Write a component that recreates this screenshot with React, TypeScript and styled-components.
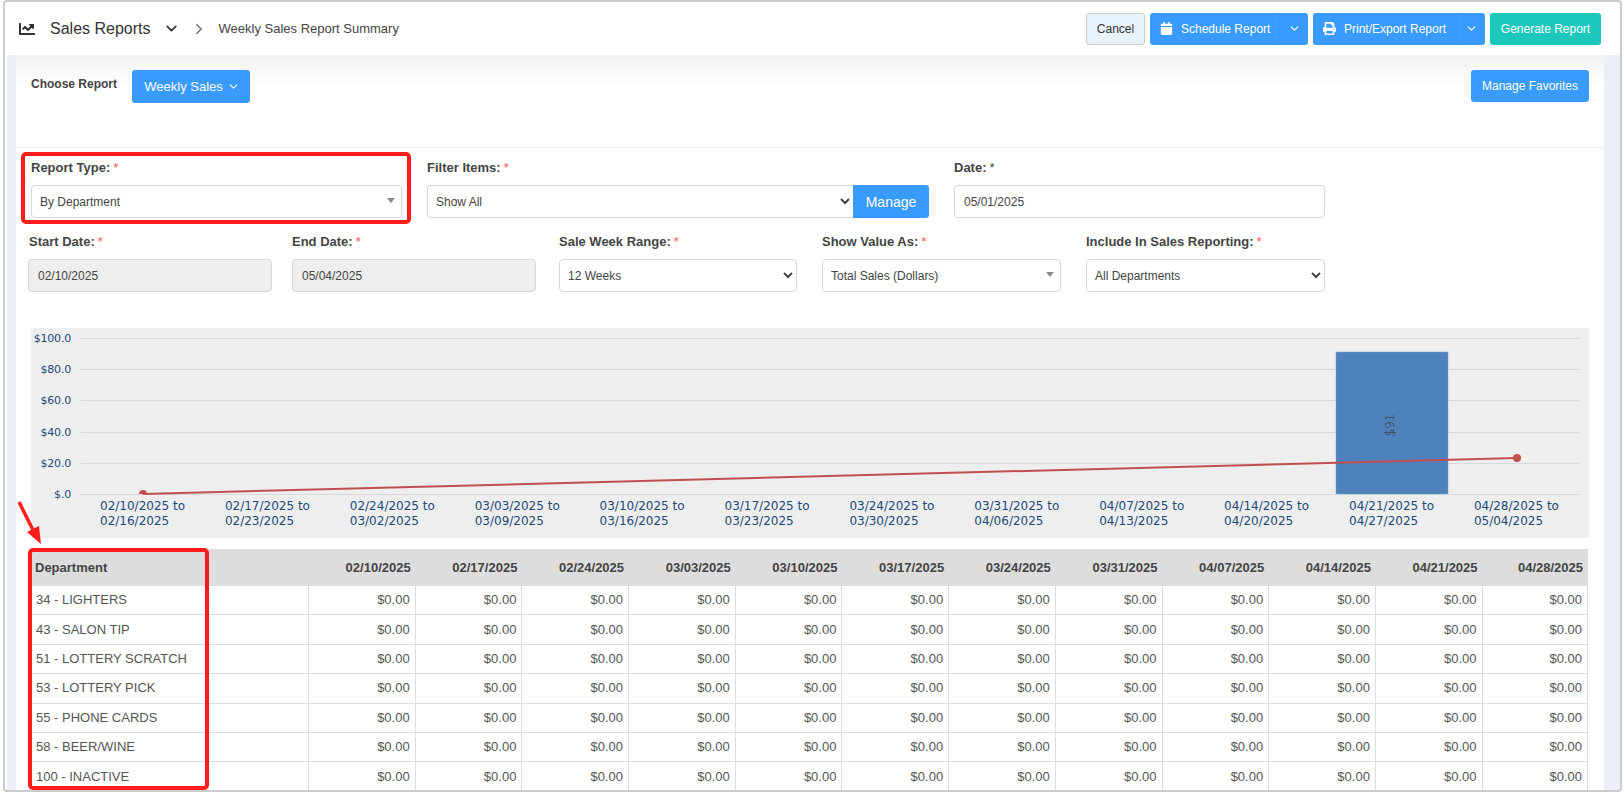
import React from 'react';
import styled, { createGlobalStyle } from 'styled-components';
import { ChevronDown, ChevronRight } from 'lucide-react';
import { FaCalendar, FaChartLine, FaPrint } from 'react-icons/fa';

const GlobalStyle = createGlobalStyle`
  html, body { margin: 0; padding: 0; background: #fff; }
  body { font-family: "Liberation Sans", Arial, sans-serif; color: #444; }
  * { box-sizing: border-box; }
`;

const Page = styled.div`
  width: 1624px;
  height: 792px;
  padding-left: 3px;
  padding-right: 2px;
  overflow: hidden;
`;

const Frame = styled.div`
  height: 792px;
  display: flex;
  flex-direction: column;
  border: 2px solid #ccc;
  border-radius: 4px;
  overflow: hidden;
  background: #fff;
`;

const TopBar = styled.header`
  height: 53px;
  flex: none;
  display: flex;
  align-items: center;
  justify-content: space-between;
  padding: 0 19px 0 14px;
`;

const TitleGroup = styled.div`
  display: flex;
  align-items: center;
  color: #333;
  svg { flex: none; }
`;

const Title = styled.span`
  font-size: 16px;
  margin-left: 15px;
  margin-right: 12px;
`;

const BreadcrumbSep = styled(ChevronRight)`
  margin-left: 10px;
  color: #777;
`;

const Crumb = styled.span`
  font-size: 13px;
  color: #444;
  margin-left: 11px;
`;

const Actions = styled.div`
  display: flex;
  gap: 5px;
  margin-top: 4px;
  margin-bottom: 4px;
`;

const Btn = styled.button<{ $tone?: 'blue' | 'green' | 'light'; $w?: number }>`
  height: 32px;
  width: ${p => (p.$w ? `${p.$w}px` : 'auto')};
  display: inline-flex;
  align-items: center;
  justify-content: center;
  padding: 0;
  border-radius: 3px;
  font-family: inherit;
  font-size: 12px;
  border: 1px solid ${p => (p.$tone === 'light' ? '#ccc' : 'transparent')};
  color: ${p => (p.$tone === 'light' ? '#333' : '#fff')};
  background: ${p => (p.$tone === 'light' ? '#e8f2fb' : p.$tone === 'green' ? '#1cc8bc' : '#3a9bff')};
`;

const Split = styled.div<{ $w: number }>`
  display: flex;
  width: ${p => p.$w}px;
  height: 32px;
  border-radius: 3px;
  overflow: hidden;
  background: #3a9bff;
  color: #fff;
  font-size: 12px;
`;

const SplitMain = styled.div<{ $w: number }>`
  width: ${p => p.$w}px;
  display: flex;
  align-items: center;
  gap: 8px;
  padding-left: 10px;
  border-right: 1px solid #3894f5;
`;

const SplitCaret = styled.div`
  flex: 1;
  display: flex;
  align-items: center;
  justify-content: center;
`;

const Body = styled.div`
  flex: 1;
  min-height: 0;
  margin-left: 2px;
  padding: 0 16px 0 9px;
  background: #eceff8;
`;

const Card = styled.main`
  height: 100%;
  overflow: hidden;
  background: linear-gradient(#f2f2f5 0, #fff 32px);
`;

const ChooserRow = styled.div`
  height: 93px;
  display: flex;
  justify-content: space-between;
  align-items: flex-start;
  padding: 15px 15px 0 15px;
  border-bottom: 1px solid #eee;
`;

const ChooserLeft = styled.div`
  display: flex;
  gap: 15px;
`;

const ChooserLabel = styled.span`
  font-size: 12px;
  font-weight: bold;
  color: #444;
  margin-top: 7px;
`;

const WeeklyBtn = styled(Btn)`
  width: 118px;
  height: 33px;
  gap: 4px;
  font-size: 13px;
  padding-left: 2px;
`;

const FormRow = styled.div<{ $top: number }>`
  display: flex;
  margin-top: ${p => p.$top}px;
`;

const Field = styled.div<{ $w: number; $left: number }>`
  position: relative;
  width: ${p => p.$w}px;
  margin-left: ${p => p.$left}px;
  flex: none;
`;

const Label = styled.label<{ $nudge?: number }>`
  display: block;
  height: 15px;
  line-height: 15px;
  margin-left: ${p => p.$nudge ?? 0}px;
  font-size: 13px;
  font-weight: bold;
  color: #444;
  margin-bottom: 10px;
`;

const Req = styled.span<{ $plain?: boolean }>`
  font-weight: normal;
  color: ${p => (p.$plain ? '#444' : '#f55')};
  margin-left: 3px;
`;

const controlCss = `
  height: 33px;
  width: 100%;
  border: 1px solid #d8d8d8;
  border-radius: 4px;
  font-family: inherit;
  font-size: 12px;
  color: #444;
  background: #fff;
`;

const TextInput = styled.input<{ $off?: boolean }>`
  ${controlCss}
  padding: 0 9px;
  background: ${p => (p.$off ? '#eee' : '#fff')};
`;

const Select = styled.select`
  ${controlCss}
  padding: 0 4px;
`;

const DropDown = styled.div`
  ${controlCss}
  display: flex;
  align-items: center;
  justify-content: space-between;
  padding: 0 6px 0 8px;
  &::after {
    content: '';
    border-left: 4px solid transparent;
    border-right: 4px solid transparent;
    border-top: 5px solid #8a8a8a;
    margin-top: -2px;
  }
`;

const InputGroup = styled.div`
  display: flex;
`;

const GroupSelect = styled(Select)`
  border-radius: 4px 0 0 4px;
  border-right: 0;
`;

const ManageBtn = styled(Btn)`
  flex: none;
  width: 76px;
  height: 33px;
  font-size: 14px;
  border-radius: 0 3px 3px 0;
`;

const ReportHighlight = styled.div`
  position: absolute;
  left: -10px;
  top: -8px;
  width: 390px;
  height: 72px;
  border: 4px solid #ff1c1c;
  border-radius: 5px;
  pointer-events: none;
`;

const ChartPanel = styled.div`
  width: 1558px;
  height: 210px;
  margin: 36px 0 0 15px;
  background: #eee;
  svg { display: block; }
  text {
    font-family: "DejaVu Sans", sans-serif;
    font-size: 12px;
    fill: #1d4a78;
  }
`;

const AxisText = styled.text`
  font-size: 11px !important;
  letter-spacing: -0.2px;
`;

const BarText = styled.text`
  fill: #333 !important;
  font-weight: 300;
`;

const TableWrap = styled.div`
  position: relative;
  width: 1559px;
  margin: 11px 0 0 13px;
`;

const Table = styled.table`
  width: 1559px;
  table-layout: fixed;
  border-collapse: separate;
  border-spacing: 0;
  font-size: 13px;
  color: #555;
`;

const NameCol = styled.col`
  width: 280px;
`;

const WeekCol = styled.col<{ $last: boolean }>`
  width: ${p => (p.$last ? 'auto' : '106.7px')};
`;

const HeadCell = styled.th<{ $left?: boolean }>`
  height: 37px;
  padding: 0 5px 1px 6px;
  background: #ddd;
  color: #444;
  font-size: 13px;
  text-align: ${p => (p.$left ? 'left' : 'right')};
`;

const NameCell = styled.td`
  height: 29.4px;
  padding: 0 5px 1px 7px;
  border-bottom: 1px solid #ddd;
  border-right: 1px solid #ddd;
`;

const ValueCell = styled(NameCell)`
  padding: 0 5px 1px 0;
  text-align: right;
`;

const TableHighlight = styled.div`
  position: absolute;
  left: -1px;
  top: -1px;
  width: 181px;
  height: 242px;
  border: 4px solid #ff1c1c;
  border-radius: 5px;
  pointer-events: none;
`;

const Arrow = styled.svg`
  position: absolute;
  left: -13px;
  top: -49px;
`;

const weeks = ['02/10/2025', '02/17/2025', '02/24/2025', '03/03/2025', '03/10/2025', '03/17/2025', '03/24/2025', '03/31/2025', '04/07/2025', '04/14/2025', '04/21/2025', '04/28/2025'];
const weekEnds = ['02/16/2025', '02/23/2025', '03/02/2025', '03/09/2025', '03/16/2025', '03/23/2025', '03/30/2025', '04/06/2025', '04/13/2025', '04/20/2025', '04/27/2025', '05/04/2025'];
const departments = ['34 - LIGHTERS', '43 - SALON TIP', '51 - LOTTERY SCRATCH', '53 - LOTTERY PICK', '55 - PHONE CARDS', '58 - BEER/WINE', '100 - INACTIVE'];
const yTicks = [
  { label: '$100.0', y: 10 },
  { label: '$80.0', y: 41 },
  { label: '$60.0', y: 72 },
  { label: '$40.0', y: 104 },
  { label: '$20.0', y: 135 },
  { label: '$.0', y: 166 }
];

function SalesChart () {
  return (
    <ChartPanel>
      <svg width="1558" height="210" viewBox="0 0 1558 210">
        <defs>
          <clipPath id="plot"><rect x="50" y="0" width="1498" height="166" /></clipPath>
        </defs>
        {yTicks.map((t) => (
          <g key={t.label}>
            <line x1="50" x2="1548" y1={t.y + 0.5} y2={t.y + 0.5} stroke="#d8d8d8" />
            <AxisText x="40" y={t.y + 4} textAnchor="end">{t.label}</AxisText>
          </g>
        ))}
        <rect x="1305" y="24" width="112" height="142" fill="#4f81bd" stroke="#7ea3cf" strokeWidth="0.5" />
        <BarText transform="translate(1363 97) rotate(-90)" textAnchor="middle">$91</BarText>
        <g clipPath="url(#plot)">
          <circle cx="112" cy="166" r="4" fill="#c0504d" />
        </g>
        <line x1="112" y1="166" x2="1486" y2="130" stroke="#c0504d" strokeWidth="2" />
        <circle cx="1486" cy="130" r="4" fill="#c0504d" />
        {weeks.map((w, i) => (
          <text key={w}>
            <tspan x={69 + i * 124.9} y="182">{w} to</tspan>
            <tspan x={69 + i * 124.9} y="197">{weekEnds[i]}</tspan>
          </text>
        ))}
      </svg>
    </ChartPanel>
  );
}

export default function App () {
  return (
    <Page>
      <GlobalStyle />
      <Frame>
        <TopBar>
          <TitleGroup>
            <FaChartLine size={16} />
            <Title>Sales Reports</Title>
            <ChevronDown size={17} strokeWidth={2.4} />
            <BreadcrumbSep size={18} />
            <Crumb>Weekly Sales Report Summary</Crumb>
          </TitleGroup>
          <Actions>
            <Btn $tone="light" $w={59}>Cancel</Btn>
            <Split $w={158}>
              <SplitMain $w={130}><FaCalendar size={13} />Schedule Report</SplitMain>
              <SplitCaret><ChevronDown size={13} strokeWidth={2.2} /></SplitCaret>
            </Split>
            <Split $w={172}>
              <SplitMain $w={144}><FaPrint size={13} />Print/Export Report</SplitMain>
              <SplitCaret><ChevronDown size={13} strokeWidth={2.2} /></SplitCaret>
            </Split>
            <Btn $tone="green" $w={111}>Generate Report</Btn>
          </Actions>
        </TopBar>
        <Body>
          <Card>
            <ChooserRow>
              <ChooserLeft>
                <ChooserLabel>Choose Report</ChooserLabel>
                <WeeklyBtn>Weekly Sales <ChevronDown size={13} /></WeeklyBtn>
              </ChooserLeft>
              <Btn $w={118}>Manage Favorites</Btn>
            </ChooserRow>
            <FormRow $top={12}>
              <Field $w={371} $left={15}>
                <ReportHighlight />
                <Label>Report Type:<Req>*</Req></Label>
                <DropDown>By Department</DropDown>
              </Field>
              <Field $w={502} $left={25}>
                <Label>Filter Items:<Req>*</Req></Label>
                <InputGroup>
                  <GroupSelect defaultValue="all"><option value="all">Show All</option></GroupSelect>
                  <ManageBtn>Manage</ManageBtn>
                </InputGroup>
              </Field>
              <Field $w={371} $left={25}>
                <Label>Date:<Req $plain>*</Req></Label>
                <TextInput readOnly value="05/01/2025" />
              </Field>
            </FormRow>
            <FormRow $top={16}>
              <Field $w={244} $left={12}>
                <Label $nudge={1}>Start Date:<Req>*</Req></Label>
                <TextInput $off readOnly value="02/10/2025" />
              </Field>
              <Field $w={244} $left={20}>
                <Label>End Date:<Req>*</Req></Label>
                <TextInput $off readOnly value="05/04/2025" />
              </Field>
              <Field $w={238} $left={23}>
                <Label>Sale Week Range:<Req>*</Req></Label>
                <Select defaultValue="12"><option value="12">12 Weeks</option></Select>
              </Field>
              <Field $w={239} $left={25}>
                <Label>Show Value As:<Req>*</Req></Label>
                <DropDown>Total Sales (Dollars)</DropDown>
              </Field>
              <Field $w={239} $left={25}>
                <Label>Include In Sales Reporting:<Req>*</Req></Label>
                <Select defaultValue="all"><option value="all">All Departments</option></Select>
              </Field>
            </FormRow>
            <SalesChart />
            <TableWrap>
              <Table>
                <colgroup>
                  <NameCol />
                  {weeks.map((w, i) => <WeekCol key={w} $last={i === weeks.length - 1} />)}
                </colgroup>
                <thead>
                  <tr>
                    <HeadCell $left>Department</HeadCell>
                    {weeks.map((w) => <HeadCell key={w}>{w}</HeadCell>)}
                  </tr>
                </thead>
                <tbody>
                  {departments.map((d) => (
                    <tr key={d}>
                      <NameCell>{d}</NameCell>
                      {weeks.map((w) => <ValueCell key={w}>$0.00</ValueCell>)}
                    </tr>
                  ))}
                </tbody>
              </Table>
              <TableHighlight />
              <Arrow width="30" height="50" viewBox="0 0 30 50">
                <line x1="3" y1="2" x2="20" y2="36" stroke="#ff1c1c" strokeWidth="3.5" />
                <polygon points="25,44 11,32 23,26" fill="#ff1c1c" />
              </Arrow>
            </TableWrap>
          </Card>
        </Body>
      </Frame>
    </Page>
  );
}
